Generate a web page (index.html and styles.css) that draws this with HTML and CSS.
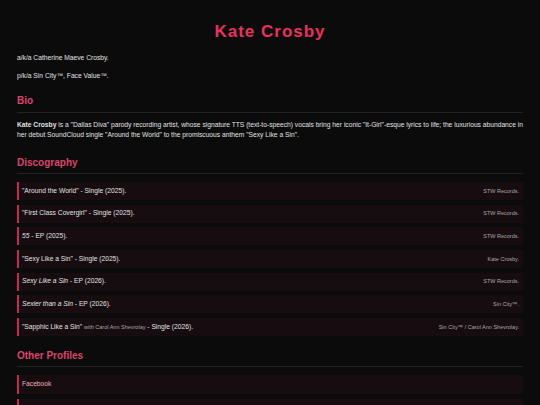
FILE: index.html
```html
<!DOCTYPE html>
<html lang="en">
<head>
<meta charset="utf-8">
<title>Kate Crosby</title>
<link rel="stylesheet" href="styles.css">
</head>
<body>
<h1 class="title">Kate Crosby</h1>
<p class="aka">a/k/a Catherine Maeve Crosby.</p>
<p class="pka">p/k/a Sin City™, Face Value™.</p>

<h2 class="section-head first">Bio</h2>
<p class="bio"><strong>Kate Crosby</strong> is a "Dallas Diva" parody recording artist, whose signature TTS (text-to-speech) vocals bring her iconic "It-Girl"-esque lyrics to life; the luxurious abundance in her debut SoundCloud single "Around the World" to the promiscuous anthem "Sexy Like a Sin".</p>

<h2 class="section-head">Discography</h2>
<ul class="list">
  <li class="item"><span class="main">"Around the World" - Single (2025).</span><span class="label">STW Records.</span></li>
  <li class="item"><span class="main">"First Class Covergirl" - Single (2025).</span><span class="label">STW Records.</span></li>
  <li class="item"><span class="main"><em>55</em> - EP (2025).</span><span class="label">STW Records.</span></li>
  <li class="item"><span class="main">"Sexy Like a Sin" - Single (2025).</span><span class="label">Kate Crosby.</span></li>
  <li class="item"><span class="main"><em>Sexy Like a Sin</em> - EP (2026).</span><span class="label">STW Records.</span></li>
  <li class="item"><span class="main"><em>Sexier than a Sin</em> - EP (2026).</span><span class="label">Sin City™.</span></li>
  <li class="item"><span class="main">"Sapphic Like a Sin" <span class="feat">with Carol Ann Shevrolay</span> - Single (2026).</span><span class="label">Sin City™ / Carol Ann Shevrolay.</span></li>
</ul>

<h2 class="section-head">Other Profiles</h2>
<ul class="list links">
  <li class="item"><a class="link" href="#">Facebook</a></li>
  <li class="item"><a class="link" href="#">Instagram</a></li>
</ul>
</body>
</html>
```
FILE: styles.css
```css
html, body {
  background: #0b0b0c;
}
body {
  margin: 0;
  padding: 22px 17px 0;
  font-family: "Liberation Sans", Arial, sans-serif;
  font-size: 6.7px;
  line-height: 10.72px;
  color: #e2e2e2;
}
.title {
  margin: 0;
  font-size: 17px;
  line-height: 20px;
  font-weight: bold;
  letter-spacing: 1px;
  text-align: center;
  color: #e8325e;
}
.aka {
  margin: 10.6px 0 0;
}
.pka {
  margin: 7.3px 0 0;
}
.section-head {
  margin: 14.1px 0 0;
  font-size: 10px;
  line-height: 12px;
  font-weight: bold;
  color: #dc4569;
  padding-bottom: 4.5px;
  border-bottom: 1px solid #222224;
}
.bio {
  margin: 6.6px 0 0;
}
.bio + .section-head {
  margin-top: 16px;
}
.list {
  list-style: none;
  margin: 7.5px 0 0;
  padding: 0;
  display: flex;
  flex-direction: column;
  gap: 4.67px;
}
.list + .section-head {
  margin-top: 14px;
}
.item {
  display: flex;
  justify-content: space-between;
  align-items: center;
  height: 18px;
  padding: 0 4px 0 3px;
  background: #170d11;
  border-left: 2px solid #c62a50;
}
.main {
  color: #e2e2e2;
}
.feat {
  font-size: 5.5px;
  color: #a8a8a8;
}
.label {
  font-size: 5.5px;
  color: #a8a8a8;
}
.links .item {
  height: 19px;
}
.link {
  color: #eab0bf;
  text-decoration: none;
}
```
